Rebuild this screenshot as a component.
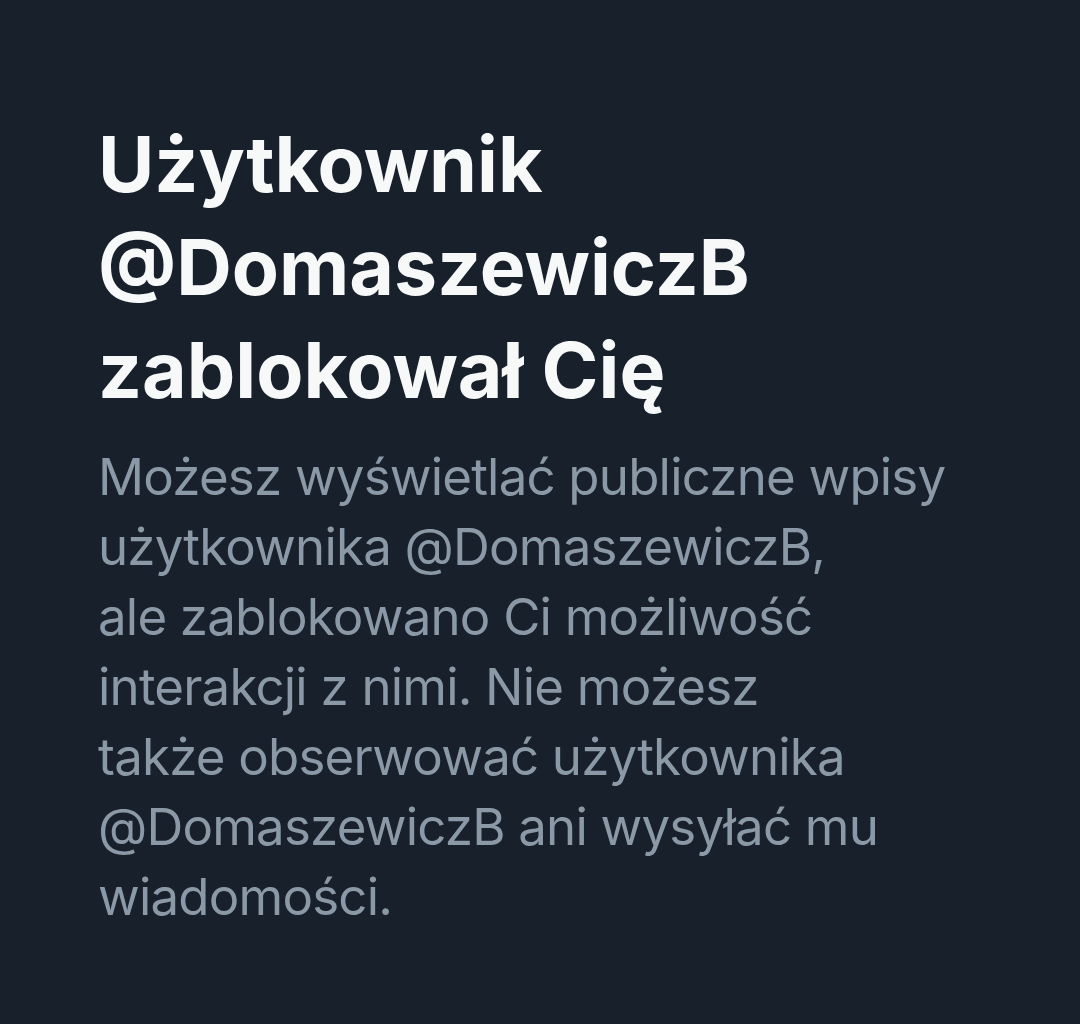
export default function App() {
  return (
    <div className="w-[1080px] h-[1024px] bg-[#17202b] overflow-hidden" style={{ fontFamily: "Inter, 'Noto Sans', sans-serif" }}>
      <div className="pl-[98px] pt-[113px] pr-[60px]">
        <h1 className="text-[77px] leading-[103px] font-bold text-[#f7f9f9] tracking-[0px]">
          Użytkownik<br />@DomaszewiczB<br />zablokował Cię
        </h1>
        <p className="mt-[20px] text-[51px] leading-[70px] text-[#8b98a5] tracking-[-0.8px]">
          Możesz wyświetlać publiczne wpisy<br />
          użytkownika @DomaszewiczB,<br />
          ale zablokowano Ci możliwość<br />
          interakcji z nimi. Nie możesz<br />
          także obserwować użytkownika<br />
          @DomaszewiczB ani wysyłać mu<br />
          wiadomości.
        </p>
      </div>
    </div>
  );
}
